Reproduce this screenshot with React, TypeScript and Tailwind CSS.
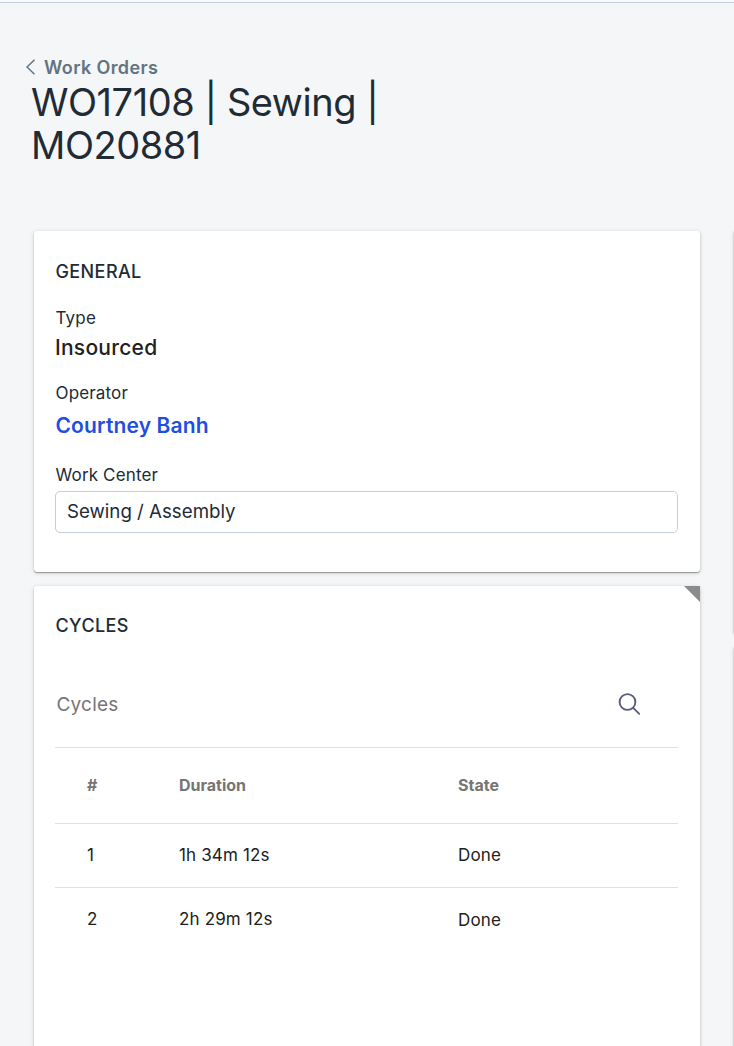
import React from "react";

const rows = [
  { id: 1, duration: "1h 34m 12s", state: "Done" },
  { id: 2, duration: "2h 29m 12s", state: "Done" },
];

export default function App() {
  return (
    <div className="flex h-[1046px] w-full flex-col overflow-hidden bg-[#f4f6f8] font-['Inter',sans-serif] text-[#212b36]">
      <div className="h-[3px] shrink-0 border-b border-[#c4cde0] bg-[#fafbfc]" />
      <header className="h-[228px] shrink-0 pt-[52px]">
        <div className="flex h-6 items-center pl-[26px] text-[18px] font-semibold tracking-[0.37px] text-[#637381]">
          <svg className="mr-[9px] h-4 w-[9px]" viewBox="0 0 9 16" fill="none" stroke="currentColor" strokeWidth="1.5">
            <path d="M8.5 0.7 1 8l7.5 7.3" />
          </svg>
          Work Orders
        </div>
        <h1 className="pl-[31px] pt-[2px] text-[38px] leading-[43px] tracking-[-0.45px]">
          WO17108 | Sewing |<br />MO20881
        </h1>
      </header>
      <div className="flex grow">
        <main className="ml-[34px] flex w-[666px] shrink-0 flex-col gap-[14px]">
          <section className="h-[341px] shrink-0 rounded-[3px] bg-white px-[21px] pt-[29px] shadow-[0_1px_1px_rgba(0,0,0,0.32),0_1px_4px_rgba(0,0,0,0.18)]">
            <h2 className="h-6 pl-[0.5px] text-[18px] leading-6 font-medium tracking-[0.4px]">GENERAL</h2>
            <div className="mt-[22px] pl-[0.5px] text-[17px] leading-6 tracking-[0.2px]">Type</div>
            <div className="mt-1 text-[21px] leading-7 font-medium tracking-[0.25px] text-[#212121]">Insourced</div>
            <div className="mt-[19px] pl-[0.5px] text-[17px] leading-6 tracking-[0.15px]">Operator</div>
            <div className="mt-[7px] pl-[0.5px] text-[21px] leading-7 font-semibold tracking-[0.15px] text-[#1f4fe0]">Courtney Banh</div>
            <div className="mt-[23px] pl-[0.5px] text-[17px] leading-6 tracking-[0.15px]">Work Center</div>
            <div className="mt-1 flex h-[42px] w-[623px] items-center rounded-[5px] border border-[#c4cddc] px-[11px] text-[18.7px]">Sewing / Assembly</div>
          </section>
          <section className="relative h-[480px] shrink-0 rounded-t-[3px] bg-white px-[21px] pt-7 shadow-[0_1px_1px_rgba(0,0,0,0.32),0_1px_4px_rgba(0,0,0,0.18)]">
            <svg className="absolute top-0 right-0 h-4 w-4" viewBox="0 0 16 16"><path d="M0 0H16V16Z" fill="#8b8b8b" /></svg>
            <h2 className="h-6 pl-[0.5px] text-[18px] leading-6 font-medium tracking-[0.4px]">CYCLES</h2>
            <div className="mt-[44px] flex h-[66px] w-[623px] justify-between border-b border-[#e0e0e0] pt-[9px] pr-[37px] pl-[1.5px] text-[19px] leading-7 tracking-[0.2px] text-[#757575]">
              Cycles
              <svg className="mt-[1px] h-6 w-6" viewBox="0 0 24 24" fill="none" stroke="#575d7b" strokeWidth="1.9" strokeLinecap="round">
                <circle cx="10.5" cy="10" r="7.9" /><path d="m16.2 15.8 6 6" />
              </svg>
            </div>
            <div className="grid h-[76px] w-[623px] grid-cols-[92px_279px_1fr] items-center border-b border-[#e0e0e0] pb-[2px] pl-8 text-[16px] font-bold text-[#757575]">
              <span>#</span><span>Duration</span><span>State</span>
            </div>
            {rows.map((row) => (
              <div key={row.id} className="group grid h-16 w-[623px] grid-cols-[92px_279px_1fr] items-center border-b border-[#e0e0e0] pl-8 text-[17px] tracking-[0.15px] text-[#212121] last:border-0">
                <span>{row.id}</span><span>{row.duration}</span><span className="group-last:pt-px">{row.state}</span>
              </div>
            ))}
          </section>
        </main>
        <aside className="ml-[34px] w-4 shrink-0">
          <div className="h-[402px] bg-white shadow-[0_1px_1px_rgba(0,0,0,0.32),0_1px_4px_rgba(0,0,0,0.18)]" />
          <div className="mt-[14px] h-[420px] bg-white shadow-[0_1px_1px_rgba(0,0,0,0.32),0_1px_4px_rgba(0,0,0,0.18)]" />
        </aside>
      </div>
    </div>
  );
}
